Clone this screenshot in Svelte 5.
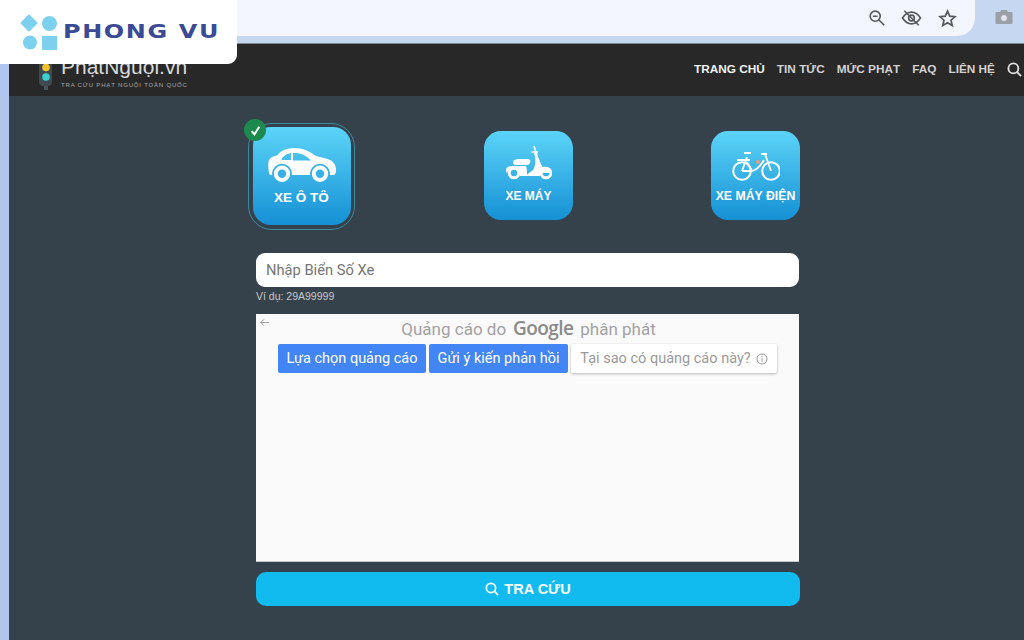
<script>
  const navItems = ['TRANG CHỦ', 'TIN TỨC', 'MỨC PHẠT', 'FAQ', 'LIÊN HỆ'];
</script>

<div class="shot">
  <div class="browser-bar">
    <div class="address">
      <svg class="tool" viewBox="0 0 20 20">
        <circle cx="8" cy="8" r="5.6" />
        <path d="M12 12l6 6M5.4 8h5.2" />
      </svg>
      <svg class="tool eye" viewBox="0 0 24 20">
        <path d="M2 10c3-4.500 6.500-6.500 10-6.500S19 5.500 22 10c-3 4.500-6.500 6.500-10 6.500S5 14.500 2 10z" />
        <circle cx="12" cy="10" r="3.200" />
        <path d="M4 2l16 16" />
      </svg>
      <svg class="tool star" viewBox="0 0 20 20">
        <path d="M10 2.200l2.300 5.300 5.700.5-4.300 3.800 1.300 5.600-5-3-5 3 1.300-5.600L2 8l5.700-.5z" />
      </svg>
    </div>
    <svg class="camera" viewBox="0 0 18 16">
      <path d="M1.500 3H5l1.200-2h5.600L13 3h3.500q1 0 1 1v10q0 1-1 1h-15q-1 0-1-1V4q0-1 1-1z" />
      <circle cx="9" cy="9" r="3.500" />
    </svg>
  </div>

  <div class="brand-card">
    <svg class="brand-mark" viewBox="0 0 38 38">
      <rect x="2.750" y="3.750" width="12.500" height="12.500" rx="1" transform="rotate(45 9 10)" />
      <circle cx="29.500" cy="10.500" r="7.500" />
      <circle cx="10" cy="29.500" r="7" />
      <rect x="22" y="23" width="15" height="14" />
    </svg>
    <span class="brand-name">PHONG VU</span>
  </div>

  <div class="frame">
    <div class="site">
      <header>
        <div class="site-logo">
          <svg class="light" viewBox="0 0 13 30">
            <rect x="0" y="0" width="13" height="26" rx="4" fill="#3f4a50" />
            <circle cx="7" cy="7.500" r="3.800" fill="#f4c430" />
            <circle cx="7" cy="17" r="3.800" fill="#3cd0d0" />
            <rect x="5" y="26" width="4" height="4" fill="#4a5358" />
          </svg>
          <div class="site-logo-text">
            <span class="site-name">PhạtNguội.vn</span>
            <span class="site-sub">TRA CỨU PHẠT NGUỘI TOÀN QUỐC</span>
          </div>
        </div>
        <nav>
          {#each navItems as item, i}
            <span class:active={i === 0}>{item}</span>
          {/each}
          <svg class="nav-search" viewBox="0 0 16 16">
            <circle cx="6.800" cy="6.800" r="5.300" />
            <path d="M10.800 10.800l4.200 4.200" />
          </svg>
        </nav>
      </header>

      <main>
        <div class="vehicles">
          <div class="vehicle-cell">
            <div class="ring">
              <span class="check">
                <svg viewBox="0 0 12 12"><path d="M2.500 6.500l2.500 3 4.500-7" /></svg>
              </span>
              <div class="tile big">
                <svg class="car" viewBox="0 0 68 36">
                  <path fill-rule="evenodd" fill="#fff" d="M1 25C0 20 0 14 1 12C3 9 6 8 9 7.500C12 3 18 0 27 0C36 0 42 4 48 8L58 10.500C64 12 67 15 68 20C68.500 23 68 26 66 27H2ZM13.500 12C15 8 18 6 23 5V12ZM25 5C32 4.500 38 7 43 12.500H25Z" />
                  <circle cx="14" cy="25.700" r="10" fill="#37b0e7" />
                  <circle cx="52" cy="25.700" r="10" fill="#37b0e7" />
                  <circle cx="14" cy="25.700" r="6.200" fill="none" stroke="#fff" stroke-width="4" />
                  <circle cx="52" cy="25.700" r="6.200" fill="none" stroke="#fff" stroke-width="4" />
                </svg>
                <span class="tile-label">XE Ô TÔ</span>
              </div>
            </div>
          </div>

          <div class="vehicle-cell plain">
            <div class="tile">
              <svg class="scooter" viewBox="0 0 47 34">
                <path fill="#fff" d="M8 16C8 14 11 13 15 13H22C25 13 26 15 25 17C24 19 22 19 20 19H10C9 19 8 18 8 16Z" />
                <path fill="#fff" d="M1 24C1 21 4 20 9 20H21C22 23 22 26 22 30H15C15 25 12 22 8 22C5 22 3 24 2 27C1 26 1 25 1 24Z" />
                <path fill="#fff" d="M29 7C31 12 31 20 28 24L20 30H35C38 26 39 22 36 18C34 14 33 10 32 7Z" />
                <path fill="#fff" d="M34 23C38 19 44 20 47 27H37Z" />
                <path fill="none" stroke="#fff" stroke-width="1.600" d="M29 0L31.500 8M26.500 6H33" />
                <circle cx="9" cy="27" r="4.800" fill="none" stroke="#fff" stroke-width="3" />
                <circle cx="41" cy="27" r="4.800" fill="none" stroke="#fff" stroke-width="3" />
              </svg>
              <span class="tile-label small">XE MÁY</span>
            </div>
          </div>

          <div class="vehicle-cell plain">
            <div class="tile">
              <svg class="bike" viewBox="0 0 48 30">
                <g fill="none" stroke="#fff">
                  <circle cx="10" cy="20" r="8.800" stroke-width="2" />
                  <circle cx="39" cy="20" r="8.800" stroke-width="2" />
                  <path stroke-width="1.800" d="M10 20L15 6M39 20L33 3M32 9C28 16 24 19 20 20H10M15 11L20 20M5 9h13M12 2h7M29 3h6" />
                </g>
                <circle cx="26" cy="11" r="2" fill="#f59b7a" />
              </svg>
              <span class="tile-label small wide">XE MÁY ĐIỆN</span>
            </div>
          </div>
        </div>

        <input class="plate" type="text" placeholder="Nhập Biển Số Xe" />
        <small>Ví dụ: 29A99999</small>

        <section class="ad">
          <svg class="ad-back" viewBox="0 0 12 12">
            <path d="M11 6H2M5.500 2.500L2 6l3.500 3.500" />
          </svg>
          <div class="ad-title">
            <span>Quảng cáo do</span>
            <span class="google">Google</span>
            <span>phân phát</span>
          </div>
          <div class="ad-actions">
            <button type="button" class="first">Lựa chọn quảng cáo</button>
            <button type="button" class="second">Gửi ý kiến phản hồi</button>
            <button type="button" class="why">
              Tại sao có quảng cáo này?
              <svg viewBox="0 0 12 12">
                <circle cx="6" cy="6" r="5" />
                <path d="M6 5.200v3.600M6 3v1.200" />
              </svg>
            </button>
          </div>
        </section>

        <button type="button" class="search">
          <svg viewBox="0 0 16 16">
            <circle cx="6.800" cy="6.800" r="5.300" />
            <path d="M10.800 10.800l4.200 4.200" />
          </svg>
          TRA CỨU
        </button>
      </main>
    </div>
  </div>
</div>

<style>
  :global(body) {
    margin: 0;
    font-family: "Liberation Sans", Arial, sans-serif;
  }

  .shot {
    position: relative;
    width: 1024px;
    height: 640px;
    overflow: hidden;
    display: flex;
    flex-direction: column;
    background: #c6d7f2;
  }

  .browser-bar {
    height: 43px;
    flex: none;
    display: flex;
    align-items: flex-start;
    border-bottom: 1px solid #7f8890;
    box-sizing: content-box;
  }

  .address {
    width: 975px;
    height: 36px;
    background: #f3f6fc;
    border-bottom-right-radius: 18px;
    display: flex;
    justify-content: flex-end;
    align-items: center;
    padding-right: 18px;
    box-sizing: border-box;
    gap: 14px;
  }

  .tool {
    width: 18px;
    height: 18px;
    fill: none;
    stroke: #55595e;
    stroke-width: 1.800;
  }

  .tool.eye {
    width: 23px;
  }

  .tool.star {
    width: 19px;
    height: 19px;
    margin-left: 1px;
  }

  .camera {
    width: 18px;
    height: 16px;
    margin: 9px 0 0 20px;
    fill: #9a9fa6;
  }

  .camera circle {
    fill: #e4e6e9;
    stroke: #9a9fa6;
  }

  .brand-card {
    position: absolute;
    left: 0;
    top: 0;
    width: 237px;
    height: 64px;
    background: #fff;
    border-bottom-right-radius: 9px;
    z-index: 2;
    display: flex;
    align-items: flex-start;
  }

  .brand-mark {
    width: 38px;
    height: 38px;
    margin: 13px 0 0 20px;
    fill: #7dd0ee;
    flex: none;
  }

  .brand-name {
    margin: 19px 0 0 5px;
    font-family: "DejaVu Sans", sans-serif;
    font-weight: 700;
    font-size: 19px;
    line-height: 24px;
    letter-spacing: 1.300px;
    color: #3a4a94;
    white-space: nowrap;
    transform: scaleX(1.260);
    transform-origin: left center;
  }

  .frame {
    flex: 1;
    padding-left: 9px;
    display: flex;
    background: #b0c6ec;
    min-height: 0;
  }

  .site {
    flex: 1;
    display: flex;
    flex-direction: column;
    background: #36424b;
  }

  header {
    height: 52px;
    flex: none;
    background: #282828;
    display: flex;
    justify-content: space-between;
    padding: 0 2px 0 30px;
  }

  .site-logo {
    display: flex;
    gap: 9px;
    padding-top: 16px;
  }

  .light {
    width: 13px;
    height: 30px;
    flex: none;
  }

  .site-logo-text {
    display: flex;
    flex-direction: column;
    margin-top: -6px;
  }

  .site-name {
    font-size: 21px;
    line-height: 26px;
    color: #d8d8d8;
  }

  .site-sub {
    margin-top: 1px;
    font-size: 6px;
    line-height: 8px;
    letter-spacing: 0.820px;
    color: #a8a8a8;
    white-space: nowrap;
  }

  nav {
    display: flex;
    align-items: center;
    gap: 12px;
    padding-bottom: 2px;
    font-size: 11.800px;
    font-weight: 700;
    color: #d2d2d2;
    white-space: nowrap;
  }

  nav .active {
    color: #f2f2f2;
  }

  .nav-search {
    width: 15px;
    height: 15px;
    fill: none;
    stroke: #e0e0e0;
    stroke-width: 2;
  }

  main {
    flex: 1;
    padding: 27px 0 0 247px;
    width: 544px;
    display: flex;
    flex-direction: column;
  }

  .vehicles {
    width: 681px;
    margin-left: -68px;
    display: grid;
    grid-template-columns: repeat(3, 227px);
    height: 107px;
    align-items: start;
    justify-items: center;
  }

  .vehicle-cell {
    display: flex;
    justify-content: center;
  }

  .vehicle-cell.plain {
    padding-top: 8px;
  }

  .ring {
    position: relative;
    width: 107px;
    height: 107px;
    box-sizing: border-box;
    border: 1px solid #3b8aa0;
    border-radius: 24px;
    display: flex;
    align-items: flex-start;
    justify-content: center;
    padding-top: 3px;
  }

  .check {
    position: absolute;
    left: -5px;
    top: -5px;
    width: 22px;
    height: 22px;
    border-radius: 50%;
    background: #1c8a4e;
    display: flex;
    align-items: center;
    justify-content: center;
  }

  .check svg {
    width: 13px;
    height: 13px;
    fill: none;
    stroke: #fff;
    stroke-width: 1.800;
  }

  .tile {
    width: 89px;
    height: 89px;
    border-radius: 17px;
    background: linear-gradient(#5cd4f8, #1590d4);
    display: flex;
    flex-direction: column;
    align-items: center;
    color: #fff;
    font-weight: 700;
  }

  .tile.big {
    width: 98px;
    height: 98px;
    border-radius: 18px;
  }

  .car {
    width: 68px;
    height: 36px;
    margin-top: 21px;
  }

  .scooter {
    width: 47px;
    height: 34px;
    margin-top: 15px;
  }

  .bike {
    width: 48px;
    height: 30px;
    margin-top: 20px;
  }

  .tile-label {
    margin-top: 6px;
    font-size: 13.500px;
    line-height: 16px;
    white-space: nowrap;
  }

  .tile-label.small {
    margin-top: 9px;
    font-size: 12px;
    line-height: 14px;
  }

  .tile-label.small.wide {
    margin-top: 8px;
    font-size: 12.300px;
  }

  .plate {
    margin-top: 23px;
    width: 543px;
    height: 34px;
    box-sizing: border-box;
    border: none;
    border-radius: 9px;
    background: #fff;
    padding: 0 10px;
    font-family: Roboto, sans-serif;
    font-size: 14.700px;
    outline: none;
  }

  .plate::placeholder {
    color: #757575;
    opacity: 1;
  }

  small {
    margin-top: 3px;
    height: 13px;
    font-size: 10.500px;
    line-height: 13px;
    color: #c4c9cd;
  }

  .ad {
    position: relative;
    margin-top: 11px;
    width: 543px;
    height: 248px;
    flex: none;
    background: #fafafa;
    border-bottom: 1px solid #c4c8cc;
    box-sizing: border-box;
  }

  .ad-back {
    position: absolute;
    left: 3px;
    top: 3px;
    width: 11px;
    height: 11px;
    fill: none;
    stroke: #9a9a9a;
    stroke-width: 1;
  }

  .ad-title {
    display: flex;
    justify-content: center;
    align-items: baseline;
    gap: 5px;
    height: 30px;
    padding: 2px 0 0 2px;
    box-sizing: border-box;
    font-family: Roboto, sans-serif;
    font-size: 17px;
    line-height: 24px;
    color: #a2a2a2;
  }

  .ad-title .google {
    margin: 0 2px;
    font-family: "Open Sans", sans-serif;
    font-size: 19px;
    font-weight: 600;
    color: #8a8a8a;
    letter-spacing: -0.600px;
  }

  .ad-actions {
    display: flex;
    padding-left: 22px;
    gap: 3px;
  }

  .ad-actions button {
    height: 29px;
    padding: 0;
    border: none;
    border-radius: 2px;
    font-family: Roboto, sans-serif;
    font-size: 14.500px;
    background: #4285f4;
    color: #fff;
    white-space: nowrap;
  }

  .first {
    width: 148px;
  }

  .second {
    width: 139px;
  }

  .ad-actions .why {
    width: 206px;
    background: #fff;
    color: #9a9a9a;
    box-shadow: 0 1px 3px rgba(0, 0, 0, 0.28);
    display: flex;
    align-items: center;
    justify-content: center;
    gap: 5px;
  }

  .why svg {
    width: 12px;
    height: 12px;
    fill: none;
    stroke: #9a9a9a;
    stroke-width: 1;
  }

  .search {
    margin-top: 10px;
    width: 544px;
    height: 34px;
    border: none;
    border-radius: 10px;
    background: #12bbef;
    color: #f4fbff;
    font-family: "Liberation Sans", sans-serif;
    font-size: 14.500px;
    font-weight: 700;
    display: flex;
    align-items: center;
    justify-content: center;
    gap: 5px;
    padding: 0;
  }

  .search svg {
    width: 14px;
    height: 14px;
    fill: none;
    stroke: #f4fbff;
    stroke-width: 2;
  }
</style>
